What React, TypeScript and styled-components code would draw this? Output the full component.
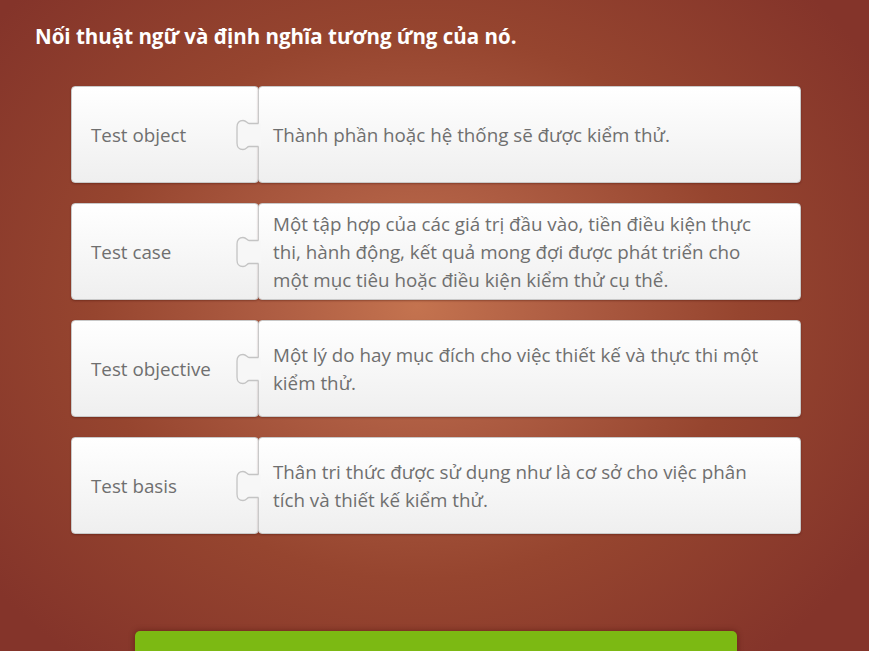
import React from "react";
import styled, { createGlobalStyle } from "styled-components";

const Global = createGlobalStyle`
  html, body { margin: 0; padding: 0; height: 100%; }
  body {
    overflow: hidden;
    background: #84342a;
    font-family: "Open Sans", "Noto Sans", sans-serif;
  }
`;

const Stage = styled.div`
  width: 869px;
  height: 651px;
  overflow: hidden;
  background: radial-gradient(
    ellipse 62% 70% at 48% 47%,
    #c4734f 0%,
    #ad5c42 28%,
    #96452f 60%,
    #84342a 100%
  );
  display: flex;
  flex-direction: column;
`;

const Title = styled.h1`
  margin: 0;
  padding: 22px 0 0 35px;
  height: 43px;
  box-sizing: border-box;
  font-size: 20.5px;
  line-height: 28px;
  font-weight: 700;
  color: #ffffff;
  letter-spacing: 0;
`;

const List = styled.div`
  margin: 43px 0 0 71px;
  width: 730px;
  display: flex;
  flex-direction: column;
  gap: 20px;
`;

const Row = styled.div`
  display: flex;
  height: 97px;
`;

const Card = styled.div`
  box-sizing: border-box;
  height: 100%;
  border: 1px solid #c9c9c9;
  border-radius: 4px;
  background: linear-gradient(#ffffff, #efefef);
  box-shadow: 0 1px 2px rgba(60, 10, 0, 0.35);
  color: #6f6f6f;
  font-size: 18.8px;
  line-height: 28px;
  display: flex;
  align-items: center;
  padding-top: 1px;
`;

const Term = styled(Card)`
  width: 188px;
  flex: none;
  padding-left: 19px;
`;

const Definition = styled(Card)`
  position: relative;
  flex: 1;
  margin-left: -1px;
  padding-left: 14px;
  padding-right: 36px;
`;

const Knob = styled.svg`
  position: absolute;
  left: -23px;
  top: calc(50% - 15px);
  width: 25px;
  height: 30px;
  overflow: visible;
`;

const PuzzleKnob = () => (
  <Knob viewBox="0 0 25 30">
    <path
      d="M25,3.5 L13,3.5 C11,3.5 10.5,0.5 7,0.5 C3,0.5 1,3 1,7 L1,23 C1,27 3,29.5 7,29.5 C10.5,29.5 11,26.5 13,26.5 L25,26.5 Z"
      fill="#f7f7f7"
    />
    <path
      d="M22.5,3.5 L13,3.5 C11,3.5 10.5,0.5 7,0.5 C3,0.5 1,3 1,7 L1,23 C1,27 3,29.5 7,29.5 C10.5,29.5 11,26.5 13,26.5 L22.5,26.5"
      fill="none"
      stroke="#c4c4c4"
      strokeWidth="1.3"
    />
  </Knob>
);

const Button = styled.div`
  margin: 97px 0 0 135px;
  width: 602px;
  height: 60px;
  flex: none;
  border-radius: 5px;
  background: #7cb913;
  box-shadow: 0 0 6px rgba(60, 10, 0, 0.45);
`;

const pairs = [
  ["Test object", "Thành phần hoặc hệ thống sẽ được kiểm thử."],
  [
    "Test case",
    "Một tập hợp của các giá trị đầu vào, tiền điều kiện thực thi, hành động, kết quả mong đợi được phát triển cho một mục tiêu hoặc điều kiện kiểm thử cụ thể.",
  ],
  [
    "Test objective",
    "Một lý do hay mục đích cho việc thiết kế và thực thi một kiểm thử.",
  ],
  [
    "Test basis",
    "Thân tri thức được sử dụng như là cơ sở cho việc phân tích và thiết kế kiểm thử.",
  ],
];

export default function App() {
  return (
    <>
      <Global />
      <Stage>
        <Title>Nối thuật ngữ và định nghĩa tương ứng của nó.</Title>
        <List>
          {pairs.map(([term, def]) => (
            <Row key={term}>
              <Term>{term}</Term>
              <Definition>
                <PuzzleKnob />
                <span>{def}</span>
              </Definition>
            </Row>
          ))}
        </List>
        <Button />
      </Stage>
    </>
  );
}
